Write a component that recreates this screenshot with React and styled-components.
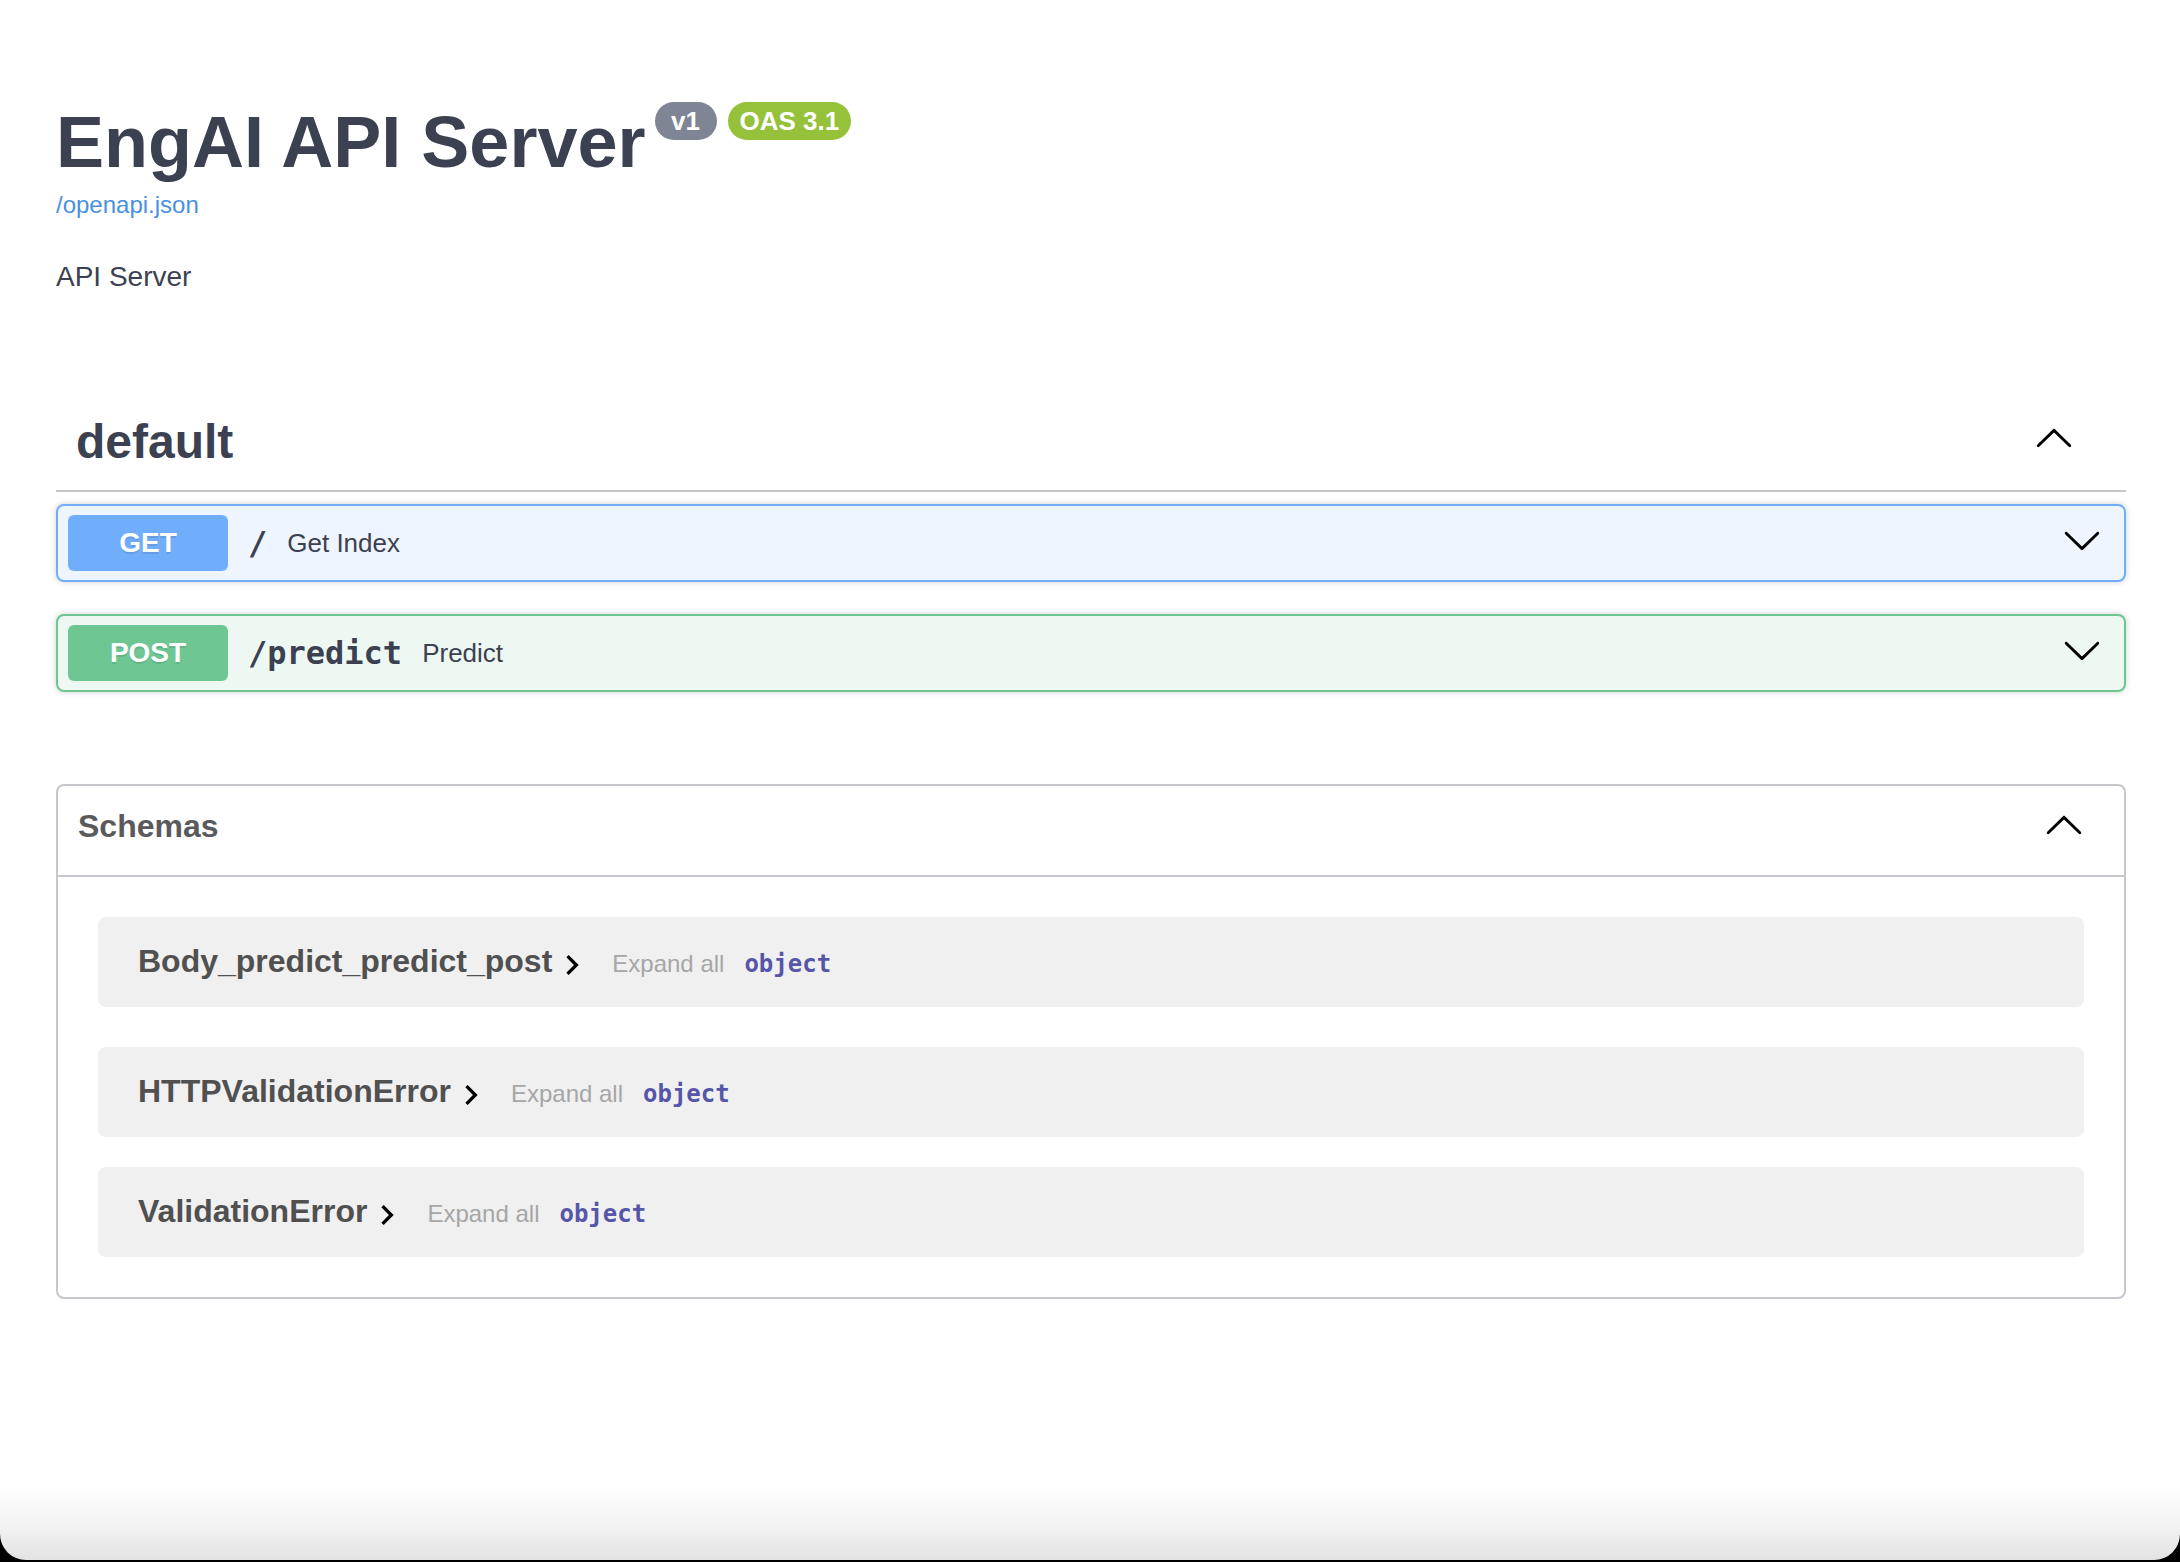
import React from 'react';
import styled, { createGlobalStyle } from 'styled-components';

const GlobalStyle = createGlobalStyle`
  html, body {
    margin: 0;
    padding: 0;
    background: #000;
  }
  body {
    font-family: "Liberation Sans", Arial, sans-serif;
  }
  * {
    box-sizing: border-box;
  }
`;

const MONO = '"DejaVu Sans Mono", "Liberation Mono", monospace';

const Window = styled.div`
  height: 1560px;
  background: linear-gradient(to bottom, #fff 0, #fff 1484px, #f4f4f4 1522px, #e3e3e3 1560px);
  border-radius: 0 0 26px 26px;
  overflow: hidden;
`;

const Wrapper = styled.div`
  padding: 100px 54px 0 56px;
`;

const TitleRow = styled.div`
  display: flex;
  align-items: flex-start;
`;

const Title = styled.h2`
  margin: 0;
  font-size: 72px;
  line-height: 84px;
  font-weight: 700;
  color: #3b4151;
`;

const Badge = styled.span`
  margin: 2px 0 0 ${(p) => (p.$first ? 9 : 11)}px;
  min-width: 62px;
  height: 38px;
  padding: 0 12px;
  border-radius: 19px;
  background: ${(p) => p.$color};
  color: #fff;
  font-size: 26px;
  font-weight: 700;
  line-height: 38px;
  text-align: center;
`;

const SpecLink = styled.a`
  display: block;
  margin-top: 7px;
  font-size: 24px;
  line-height: 28px;
  color: #4990e2;
  text-decoration: none;
`;

const Description = styled.p`
  margin: 42px 0 0;
  font-size: 28px;
  line-height: 32px;
  color: #3b4151;
`;

const TagSection = styled.section`
  margin-top: 101px;
`;

const Tag = styled.div`
  display: flex;
  align-items: center;
  justify-content: space-between;
  padding: 20px 52px 20px 20px;
  border-bottom: 2px solid #c6c7cc;
  margin-bottom: 12px;
`;

const TagName = styled.h3`
  margin: 0;
  font-size: 48px;
  line-height: 56px;
  font-weight: 700;
  color: #3b4151;
`;

const Opblock = styled.div`
  display: flex;
  align-items: center;
  margin-bottom: ${(p) => (p.$last ? 0 : 32)}px;
  padding: 9px 10px;
  border: 2px solid ${(p) => p.$border};
  border-radius: 8px;
  background: ${(p) => p.$bg};
  box-shadow: 0 0 6px rgba(0, 0, 0, 0.19);
`;

const Method = styled.span`
  width: 160px;
  height: 56px;
  flex-shrink: 0;
  border-radius: 6px;
  background: ${(p) => p.$color};
  color: #fff;
  font-size: 28px;
  font-weight: 700;
  line-height: 56px;
  text-align: center;
  text-shadow: 0 2px 0 rgba(0, 0, 0, 0.1);
`;

const Path = styled.span`
  padding: 0 20px;
  font-family: ${MONO};
  font-size: 32px;
  font-weight: 700;
  color: #3b4151;
`;

const Summary = styled.span`
  flex: 1;
  font-size: 26px;
  color: #3b4151;
`;

const ArrowSvg = styled.svg`
  width: 40px;
  height: 40px;
  flex-shrink: 0;
  margin: ${(p) => p.$margin || '0'};
  transform: ${(p) => (p.$up ? 'rotate(180deg)' : 'none')};
`;

const Arrow = ({ up, margin }) => (
  <ArrowSvg viewBox="0 0 20 20" $up={up} $margin={margin}>
    <path
      fill="#000"
      d="M17.418 6.109c.272-.268.709-.268.979 0s.271.701 0 .969l-7.908 7.83c-.27.268-.707.268-.979 0l-7.908-7.83c-.27-.268-.27-.701 0-.969.271-.268.709-.268.979 0L10 13.25l7.418-7.141z"
    />
  </ArrowSvg>
);

const Models = styled.section`
  margin-top: 92px;
  border: 2px solid #c6c7cc;
  border-radius: 8px;
`;

const ModelsHeader = styled.div`
  display: flex;
  align-items: center;
  justify-content: space-between;
  padding: 15px 40px 24px 20px;
  border-bottom: 2px solid #c6c7cc;
`;

const ModelsTitle = styled.h4`
  margin: 0;
  font-size: 32px;
  line-height: 50px;
  font-weight: 700;
  color: #5a5a5a;
`;

const ModelsBody = styled.div`
  padding: 40px 40px 40px;
`;

const ModelContainer = styled.div`
  display: flex;
  align-items: center;
  height: 90px;
  margin-bottom: ${(p) => p.$gap}px;
  padding: 2px 40px 0;
  border-radius: 8px;
  background: #f0f0f0;
`;

const ModelBox = styled.div`
  display: flex;
  align-items: baseline;
`;

const ModelTitle = styled.span`
  font-size: 32px;
  line-height: 40px;
  font-weight: 700;
  color: #505050;
`;

const ToggleSvg = styled.svg`
  width: 40px;
  height: 40px;
  align-self: center;
  margin-top: 4px;
`;

const Toggle = () => (
  <ToggleSvg viewBox="0 0 24 24">
    <path fill="#000" d="M10 6 8.59 7.41 13.17 12l-4.58 4.59L10 18l6-6z" />
  </ToggleSvg>
);

const ExpandAll = styled.span`
  margin-left: 20px;
  font-size: 24px;
  line-height: 28px;
  color: #a6a6a6;
`;

const PropType = styled.span`
  margin-left: 20px;
  font-family: ${MONO};
  font-size: 24px;
  font-weight: 700;
  color: #55a;
`;

const ops = [
  { method: 'GET', path: '/', summary: 'Get Index', color: '#70adfb', bg: '#eef5fe' },
  { method: 'POST', path: '/predict', summary: 'Predict', color: '#6ec793', bg: '#eef8f2' },
];

const schemas = [
  { name: 'Body_predict_predict_post', gap: 40 },
  { name: 'HTTPValidationError', gap: 30 },
  { name: 'ValidationError', gap: 0 },
];

export default function App() {
  return (
    <>
      <GlobalStyle />
      <Window>
        <Wrapper>
          <TitleRow>
            <Title>EngAI API Server</Title>
            <Badge $first $color="#7f8594">v1</Badge>
            <Badge $color="#95c13b">OAS 3.1</Badge>
          </TitleRow>
          <SpecLink href="#">/openapi.json</SpecLink>
          <Description>API Server</Description>

          <TagSection>
            <Tag>
              <TagName>default</TagName>
              <Arrow up margin="0 0 6px 0" />
            </Tag>
            {ops.map((op, i) => (
              <Opblock key={op.method} $border={op.color} $bg={op.bg} $last={i === ops.length - 1}>
                <Method $color={op.color}>{op.method}</Method>
                <Path>{op.path}</Path>
                <Summary>{op.summary}</Summary>
                <Arrow margin="0 12px 6px 0" />
              </Opblock>
            ))}
          </TagSection>

          <Models>
            <ModelsHeader>
              <ModelsTitle>Schemas</ModelsTitle>
              <Arrow up />
            </ModelsHeader>
            <ModelsBody>
              {schemas.map((s) => (
                <ModelContainer key={s.name} $gap={s.gap}>
                  <ModelBox>
                    <ModelTitle>{s.name}</ModelTitle>
                    <Toggle />
                    <ExpandAll>Expand all</ExpandAll>
                    <PropType>object</PropType>
                  </ModelBox>
                </ModelContainer>
              ))}
            </ModelsBody>
          </Models>
        </Wrapper>
      </Window>
    </>
  );
}
